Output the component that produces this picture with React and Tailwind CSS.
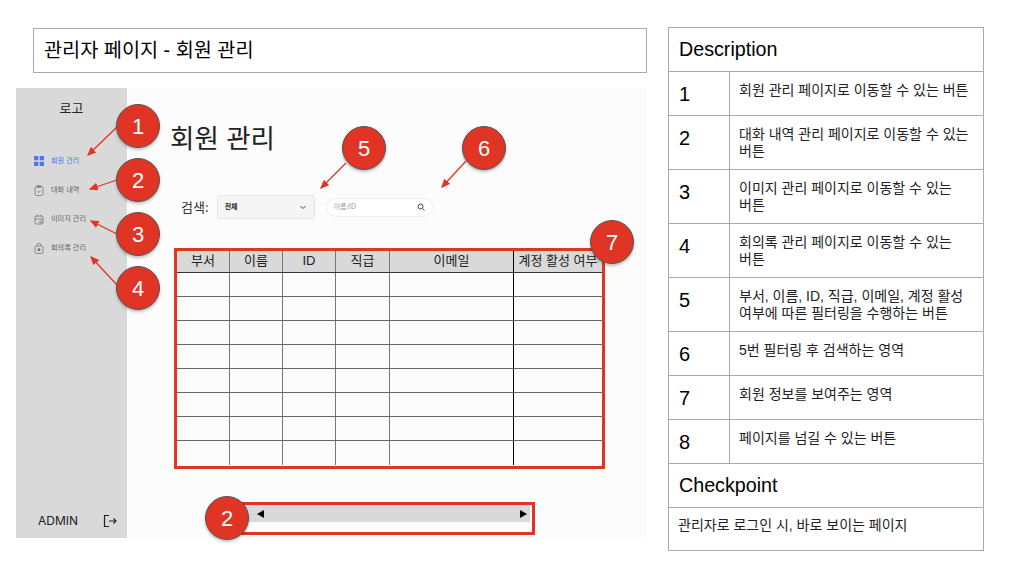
import React from 'react';

const FONT = "font-['Liberation_Sans','Noto_Sans_CJK_KR',sans-serif]";
const UI_FONT = "font-['Inter','Noto_Sans_CJK_KR',sans-serif]";

const navItems = [
  { label: '회원 관리', active: true, icon: 'grid' },
  { label: '대화 내역', icon: 'clipboard' },
  { label: '이미지 관리', icon: 'calendar' },
  { label: '회의록 관리', icon: 'bag' },
];

const columns = [
  { label: '부서', width: 'w-[53px]' },
  { label: '이름', width: 'w-[53px]' },
  { label: 'ID', width: 'w-[53px]' },
  { label: '직급', width: 'w-[54px]' },
  { label: '이메일', width: 'w-[124px]' },
  { label: '계정 활성 여부', width: 'flex-1' },
];

const descriptions = [
  { no: '1', text: '회원 관리 페이지로 이동할 수 있는 버튼', height: 'h-[44px]' },
  { no: '2', text: '대화 내역 관리 페이지로 이동할 수 있는 버튼', height: 'h-[54px]' },
  { no: '3', text: '이미지 관리 페이지로 이동할 수 있는 버튼', height: 'h-[54px]' },
  { no: '4', text: '회의록 관리 페이지로 이동할 수 있는 버튼', height: 'h-[54px]' },
  { no: '5', text: '부서, 이름, ID, 직급, 이메일, 계정 활성 여부에 따른 필터링을 수행하는 버튼', height: 'h-[54px]' },
  { no: '6', text: '5번 필터링 후 검색하는 영역', height: 'h-[44px]' },
  { no: '7', text: '회원 정보를 보여주는 영역', height: 'h-[44px]' },
  { no: '8', text: '페이지를 넘길 수 있는 버튼', height: 'h-[44px]' },
];

const badges = [
  { no: '1', pos: 'left-[116px] top-[104px]' },
  { no: '2', pos: 'left-[116px] top-[158px]' },
  { no: '3', pos: 'left-[116px] top-[212px]' },
  { no: '4', pos: 'left-[116px] top-[266px]' },
  { no: '5', pos: 'left-[342px] top-[126px]' },
  { no: '6', pos: 'left-[462px] top-[126px]' },
  { no: '7', pos: 'left-[590px] top-[220px]' },
  { no: '2', pos: 'left-[205px] top-[496px]' },
];

const arrows = [
  [117, 127, 88, 155],
  [117, 180, 90, 189],
  [117, 234, 91, 221],
  [117, 285, 91, 257],
  [346, 163, 321, 188],
  [466, 161, 442, 187],
];

const NavIcon = ({ type }) => {
  if (type === 'grid') {
    return (
      <svg width="10" height="10" viewBox="0 0 10 10" fill="#4a78f5">
        <rect x="0" y="0" width="4.3" height="4.3" rx="0.6" />
        <rect x="5.7" y="0" width="4.3" height="4.3" rx="0.6" />
        <rect x="0" y="5.7" width="4.3" height="4.3" rx="0.6" />
        <rect x="5.7" y="5.7" width="4.3" height="4.3" rx="0.6" />
      </svg>
    );
  }
  return (
    <svg width="10" height="11" viewBox="0 0 10 11" fill="none" stroke="#777" strokeWidth="0.8">
      {type === 'clipboard' && (
        <>
          <rect x="1" y="1.5" width="8" height="9" rx="1.5" />
          <rect x="3" y="0.5" width="4" height="2" rx="0.6" />
          <path d="M3.2 6.5l1.3 1.2 2.3-2.3" />
        </>
      )}
      {type === 'calendar' && (
        <>
          <rect x="1" y="2" width="8" height="8" rx="1.2" />
          <path d="M1 5h8M3 0.8v2M7 0.8v2" />
          <circle cx="6.8" cy="8" r="1.2" />
        </>
      )}
      {type === 'bag' && (
        <>
          <rect x="1" y="3" width="8" height="7.5" rx="1.5" />
          <path d="M3.2 3V2a1.8 1.8 0 0 1 3.6 0v1" />
          <circle cx="5" cy="6.7" r="1.2" fill="#777" />
        </>
      )}
    </svg>
  );
};

const Sidebar = () => (
  <aside className="flex w-[111px] shrink-0 flex-col bg-[#d9d9d9]">
    <div className="mt-[11px] text-center text-[13px] leading-[18px] text-[#222]">로고</div>
    <nav className="mt-[37px] flex flex-col gap-[15px] pl-[18px]">
      {navItems.map((item) => (
        <div key={item.label} className="flex h-[14px] items-center gap-[7px]">
          <span className="flex w-[10px] justify-center">
            <NavIcon type={item.icon} />
          </span>
          <span className={`text-[7.2px] leading-none ${item.active ? 'text-[#4a78f5]' : 'text-[#666]'}`}>{item.label}</span>
        </div>
      ))}
    </nav>
    <div className="mt-auto mb-[9px] flex items-center justify-between pl-[22px] pr-[10px]">
      <span className="text-[12px] leading-[16px] text-[#222]">ADMIN</span>
      <svg width="14" height="14" viewBox="0 0 14 14" fill="none" stroke="#222" strokeWidth="1.2">
        <path d="M6 1.5H1.5v11H6M6 7h7M10.5 4.5L13 7l-2.5 2.5" />
      </svg>
    </div>
  </aside>
);

const MemberTable = () => (
  <div className="ml-[47px] mt-[29px] h-[221px] w-[431px] border-[3px] border-[#e03424]">
    <div className={`flex h-[22px] border-b border-[#333] bg-[#d9d9d9] ${FONT}`}>
      {columns.map((col, i) => (
        <div
          key={col.label}
          className={`${col.width} ${i < 4 ? 'border-r border-[#777]' : i === 4 ? 'border-r border-black' : ''} whitespace-nowrap text-center text-[13px] leading-[19px] text-[#222]`}
        >
          {col.label}
        </div>
      ))}
    </div>
    {[0, 1, 2, 3, 4, 5, 6, 7].map((row) => (
      <div key={row} className={`flex h-[24px] ${row < 7 ? 'border-b border-[#666]' : ''}`}>
        {columns.map((col, i) => (
          <div
            key={col.label}
            className={`${col.width} ${i < 4 ? 'border-r border-[#777]' : i === 4 ? 'border-r border-black' : ''}`}
          ></div>
        ))}
      </div>
    ))}
  </div>
);

const Pagination = () => (
  <div className="ml-[109px] mt-[33px] h-[33px] w-[299px] border-[3px] border-[#e03424]">
    <div className="mr-[2px] flex h-[17px] items-center justify-between bg-[#d9d9d9] pl-[18px] pr-[3px]">
      <span className="h-0 w-0 border-y-[4px] border-r-[7px] border-y-transparent border-r-black"></span>
      <span className="h-0 w-0 border-y-[4px] border-l-[7px] border-y-transparent border-l-black"></span>
    </div>
  </div>
);

const MemberPage = () => (
  <div className={`flex h-[450px] w-[631px] bg-[#fcfcfc] ${UI_FONT}`}>
    <Sidebar />
    <main className="min-w-0 flex-1">
      <h1 className="ml-[43px] mt-[32px] text-[26.5px] leading-[36px] font-normal text-[#222]">회원 관리</h1>
      <div className="ml-[54px] mt-[39px] flex items-center">
        <span className="text-[13px] leading-[18px] text-[#333]">검색:</span>
        <div className="ml-[8px] flex h-[24px] w-[98px] items-center justify-between rounded-[3px] border border-[#e5e5e5] bg-[#f5f5f5] pl-[7px] pr-[7px]">
          <span className="text-[7px] font-bold text-[#222]">전체</span>
          <svg width="8" height="8" viewBox="0 0 8 8" fill="none" stroke="#444" strokeWidth="1">
            <path d="M1.5 3l2.5 2.5L6.500 3" />
          </svg>
        </div>
        <div className="ml-[11px] flex h-[19px] w-[107px] items-center justify-between rounded-full border border-[#eee] bg-white pl-[7px] pr-[7px]">
          <span className="text-[7px] text-[#999]">이름/ID</span>
          <svg width="8" height="8" viewBox="0 0 8 8" fill="none" stroke="#444" strokeWidth="1">
            <circle cx="3.500" cy="3.500" r="2.500" />
            <path d="M5.500 5.500L7.500 7.500" />
          </svg>
        </div>
      </div>
      <MemberTable />
      <Pagination />
    </main>
  </div>
);

const DescriptionPanel = () => (
  <div className={`w-[316px] shrink-0 border border-[#aaa] text-black ${FONT}`}>
    <div className="flex h-[44px] items-center border-b border-[#aaa] pl-[10px] pt-[1px] text-[19.7px]">Description</div>
    {descriptions.map((d) => (
      <div key={d.no} className={`flex ${d.height} border-b border-[#aaa]`}>
        <div className="w-[61px] shrink-0 border-r border-[#aaa] pl-[10px] pt-[9px] text-[20px] leading-[26px]">{d.no}</div>
        <div className="break-keep pl-[9px] pr-[6px] pt-[10px] text-[14px] leading-[17px] text-[#222]">{d.text}</div>
      </div>
    ))}
    <div className="flex h-[44px] items-center border-b border-[#aaa] pl-[10px] pt-[1px] text-[19.7px]">Checkpoint</div>
    <div className="h-[42px] pl-[9px] pt-[9px] text-[14px] leading-[17px] text-[#222]">관리자로 로그인 시, 바로 보이는 페이지</div>
  </div>
);

const Annotations = () => (
  <>
    <svg className="pointer-events-none absolute left-0 top-0" width="1009" height="569">
      <defs>
        <marker id="head" markerWidth="8" markerHeight="8" refX="6" refY="3" orient="auto">
          <path d="M0 0L7 3L0 6z" fill="#e03424" />
        </marker>
      </defs>
      {arrows.map(([x1, y1, x2, y2]) => (
        <line key={`${x1}-${y1}`} x1={x1} y1={y1} x2={x2} y2={y2} stroke="#e03424" strokeWidth="1.3" markerEnd="url(#head)" />
      ))}
    </svg>
    {badges.map((b) => (
      <div
        key={b.pos}
        className={`absolute ${b.pos} flex h-[44px] w-[44px] items-center justify-center rounded-full border border-[#555] bg-[#e03424] text-[22px] text-white shadow-[0_2px_3px_rgba(0,0,0,0.25)] ${FONT}`}
      >
        {b.no}
      </div>
    ))}
  </>
);

export default function App() {
  return (
    <div className="relative h-[569px] w-[1009px] overflow-hidden bg-white">
      <div className="flex pl-[16px] pt-[27px]">
        <div className="w-[631px] shrink-0">
          <div className={`ml-[17px] mt-[1px] flex h-[45px] w-[614px] items-center border border-[#aaa] pl-[10px] text-[19.7px] text-black ${FONT}`}>
            관리자 페이지 - 회원 관리
          </div>
          <div className="mt-[15px]">
            <MemberPage />
          </div>
        </div>
        <div className="ml-[21px]">
          <DescriptionPanel />
        </div>
      </div>
      <Annotations />
    </div>
  );
}
